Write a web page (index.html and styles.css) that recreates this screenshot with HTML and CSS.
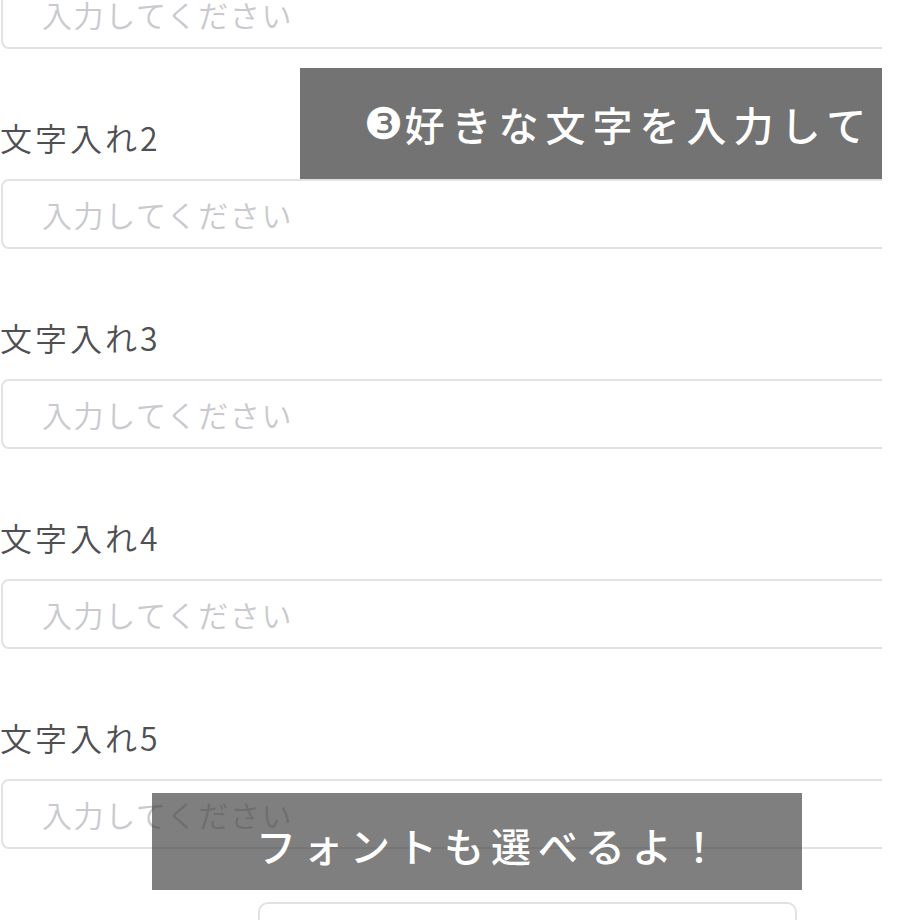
FILE: index.html
```html
<!DOCTYPE html>
<html lang="ja">
<head>
<meta charset="utf-8">
<link rel="stylesheet" href="styles.css">
</head>
<body>
<div class="page">
  <div class="form">
    <div class="field first">
      <input class="input" type="text" placeholder="入力してください">
    </div>
    <div class="field">
      <label class="label">文字入れ2</label>
      <input class="input" type="text" placeholder="入力してください">
    </div>
    <div class="field">
      <label class="label">文字入れ3</label>
      <input class="input" type="text" placeholder="入力してください">
    </div>
    <div class="field">
      <label class="label">文字入れ4</label>
      <input class="input" type="text" placeholder="入力してください">
    </div>
    <div class="field">
      <label class="label">文字入れ5</label>
      <input class="input" type="text" placeholder="入力してください">
    </div>
    <div class="font-row">
      <span class="font-label">フォント</span>
      <div class="select"></div>
    </div>
  </div>
  <div class="note note-top"><span class="num">❸</span>好きな文字を入力して</div>
  <div class="note note-bottom">フォントも選べるよ！</div>
</div>
</body>
</html>
```
FILE: styles.css
```css
html, body {
  margin: 0;
  padding: 0;
  background: #ffffff;
}
body {
  width: 920px;
  height: 920px;
  overflow: hidden;
  font-family: "Noto Sans CJK JP", "Noto Sans", sans-serif;
}
.page {
  position: relative;
  width: 882px;
  height: 920px;
  overflow: hidden;
}
.form {
  display: flex;
  flex-direction: column;
  margin-top: -21px;
}
.field {
  display: flex;
  flex-direction: column;
}
.label {
  display: block;
  margin-top: 68px;
  margin-bottom: 22px;
  height: 40px;
  line-height: 40px;
  font-size: 32px;
  font-weight: 350;
  letter-spacing: 3px;
  color: #505054;
}
.input {
  box-sizing: border-box;
  width: 930px;
  height: 70px;
  margin: 0 0 0 1px;
  padding: 0 0 0 39px;
  border: 2px solid #e2e2e6;
  border-radius: 8px;
  background: #ffffff;
  font-family: "Noto Sans CJK JP", "Noto Sans", sans-serif;
  font-size: 30px;
  font-weight: 350;
  letter-spacing: 1.6px;
  color: #333;
  outline: none;
}
.input::placeholder {
  color: #c9c9ce;
}
.font-row {
  display: flex;
  align-items: flex-start;
  margin-top: 53px;
}
.font-label {
  margin-left: 108px;
  margin-top: 8px;
  font-size: 30px;
  line-height: 40px;
  color: #d6d6d8;
  width: 150px;
}
.select {
  box-sizing: border-box;
  width: 539px;
  height: 70px;
  border: 2px solid #e2e2e6;
  border-radius: 10px;
}
.note {
  position: absolute;
  display: flex;
  align-items: center;
  color: #ffffff;
  font-family: "Noto Sans CJK JP", "DejaVu Sans", sans-serif;
  font-weight: 500;
  white-space: nowrap;
}
.note-top {
  top: 68px;
  left: 300px;
  width: 620px;
  height: 111px;
  padding-left: 64px;
  box-sizing: border-box;
  background: rgba(58, 58, 58, 0.71);
  font-size: 40px;
  letter-spacing: 7px;
}
.num {
  letter-spacing: 1px;
  font-family: "DejaVu Sans", "Noto Sans CJK JP", sans-serif;
  font-size: 44px;
}
.note-bottom {
  top: 793px;
  left: 152px;
  width: 650px;
  height: 97px;
  padding-left: 104px;
  padding-top: 6px;
  box-sizing: border-box;
  background: rgba(66, 66, 66, 0.68);
  font-size: 40px;
  letter-spacing: 7px;
}
```
